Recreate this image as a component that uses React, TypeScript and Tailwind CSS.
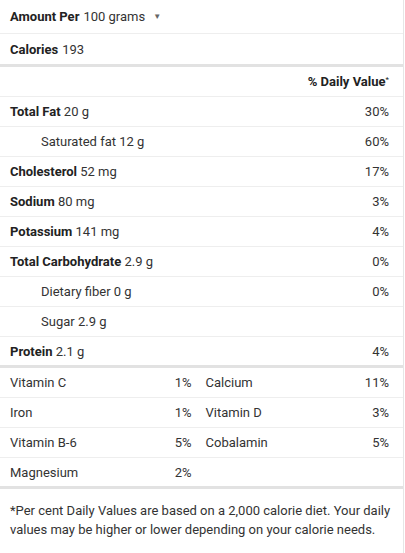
import React from 'react'

type Nutrient = {
    label: string
    amount: string
    dv?: string
    bold?: boolean
    indent?: boolean
}

const nutrients: Nutrient[] = [
    { label: 'Total Fat', amount: '20 g', dv: '30%', bold: true },
    { label: 'Saturated fat', amount: '12 g', dv: '60%', indent: true },
    { label: 'Cholesterol', amount: '52 mg', dv: '17%', bold: true },
    { label: 'Sodium', amount: '80 mg', dv: '3%', bold: true },
    { label: 'Potassium', amount: '141 mg', dv: '4%', bold: true },
    { label: 'Total Carbohydrate', amount: '2.9 g', dv: '0%', bold: true },
    { label: 'Dietary fiber', amount: '0 g', dv: '0%', indent: true },
    { label: 'Sugar', amount: '2.9 g', indent: true },
]

const vitamins: [string, string, string?, string?][] = [
    ['Vitamin C', '1%', 'Calcium', '11%'],
    ['Iron', '1%', 'Vitamin D', '3%'],
    ['Vitamin B-6', '5%', 'Cobalamin', '5%'],
    ['Magnesium', '2%'],
]

function Row({ children, className = '' }: { children: React.ReactNode; className?: string }) {
    return (
        <div className={`flex items-center h-[30px] px-[10px] pr-[14px] border-b border-[#eeeeee] ${className}`}>
            {children}
        </div>
    )
}

export default function App() {
    return (
        <div
            className="w-[404px] bg-white border-r border-[#e6e6e6] text-[13px] text-[#333] leading-none"
            style={{ fontFamily: 'Roboto, "Liberation Sans", Arial, sans-serif' }}
        >
            {/* Serving size */}
            <Row className="h-[34px]">
                <span className="font-bold text-[#222]">Amount Per</span>
                <span className="ml-1">100 grams</span>
                <span className="ml-[8px] text-[8px] text-[#666]">▼</span>
            </Row>

            <div className="flex items-center h-[33px] px-[10px] border-b-[3px] border-[#e2e2e2]">
                <span className="font-bold text-[#222]">Calories</span>
                <span className="ml-1">193</span>
            </div>

            <Row className="h-[29px] justify-end">
                <span className="font-bold text-[#222]">
                    % Daily Value<sup className="text-[8px] font-normal">*</sup>
                </span>
            </Row>

            {nutrients.map((n) => (
                <Row key={n.label}>
                    <span className={n.indent ? 'pl-[31px]' : ''}>
                        <span className={n.bold ? 'font-bold text-[#222]' : ''}>{n.label}</span>{' '}
                        {n.amount}
                    </span>
                    <span className="ml-auto">{n.dv}</span>
                </Row>
            ))}

            <div className="flex items-center h-[31px] px-[10px] pr-[14px] border-b-[3px] border-[#e2e2e2]">
                <span>
                    <span className="font-bold text-[#222]">Protein</span> 2.1 g
                </span>
                <span className="ml-auto">4%</span>
            </div>

            {vitamins.map((v, i) => (
                <div
                    key={v[0]}
                    className={`grid grid-cols-2 items-center ${
                        i === vitamins.length - 1
                            ? 'h-[31px] border-b-[3px] border-[#e2e2e2]'
                            : 'h-[30px] border-b border-[#eeeeee]'
                    }`}
                >
                    <div className="flex pl-[10px] pr-[10px]">
                        <span>{v[0]}</span>
                        <span className="ml-auto">{v[1]}</span>
                    </div>
                    <div className="flex pl-[4px] pr-[14px]">
                        <span>{v[2]}</span>
                        <span className="ml-auto">{v[3]}</span>
                    </div>
                </div>
            ))}

            <p className="px-[10px] pt-[12px] pb-[20px] leading-[19px] text-[#333]">
                *Per cent Daily Values are based on a 2,000 calorie diet. Your daily values may be higher or lower
                depending on your calorie needs.
            </p>
        </div>
    )
}
